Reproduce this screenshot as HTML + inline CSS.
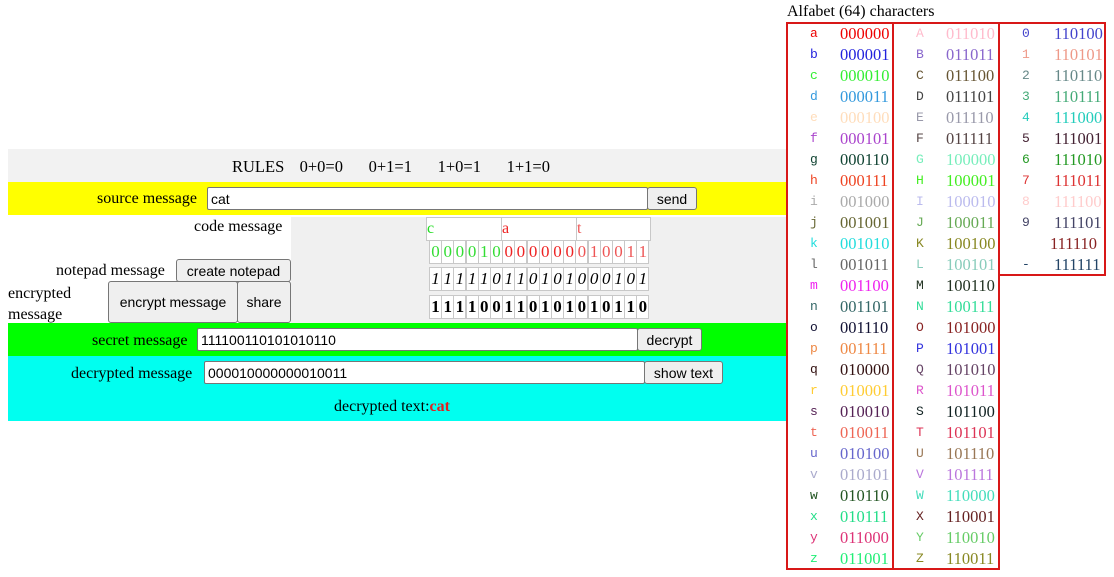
<!DOCTYPE html>
<html><head><meta charset="utf-8">
<style>
*{margin:0;padding:0;box-sizing:border-box}
body{width:1114px;height:577px;background:#fff;position:relative;overflow:hidden;font-family:"Liberation Serif",serif;font-size:16px;color:#000}
.a{position:absolute}
.band{position:absolute;left:8px;width:778px}
input.t{position:absolute;height:23px;border:1px solid #767676;border-radius:2px;background:#fff;font-family:"Liberation Sans",sans-serif;font-size:14px;padding:0 3px;color:#000}
.btn{position:absolute;background:#efefef;border:1px solid #767676;border-radius:3px;font-family:"Liberation Sans",sans-serif;font-size:14px;display:flex;align-items:center;justify-content:center;color:#000}
.cell{position:absolute;border:1px solid #c8c8c8;background:#fff;text-align:center;line-height:21px;font-size:17px}
.box{position:absolute;border:2px solid #d81818}
.r{position:absolute;height:21px;line-height:21px}
.r .l{position:absolute;font-family:"Liberation Mono",monospace;font-size:13px}
.r .c{position:absolute;font-size:16.5px}
</style></head><body>
<div class="band" style="top:149px;height:33px;background:#f2f2f2"></div>
<div class="a" style="left:232px;top:157px;font-size:16.5px;word-spacing:1px">RULES&nbsp;&nbsp;&nbsp;0+0=0&nbsp;&nbsp;&nbsp;&nbsp;&nbsp;0+1=1&nbsp;&nbsp;&nbsp;&nbsp;&nbsp;1+0=1&nbsp;&nbsp;&nbsp;&nbsp;&nbsp;1+1=0</div>
<div class="band" style="top:182px;height:33px;background:#ffff00"></div>
<div class="a" style="left:97px;top:190px">source message</div>
<input class="t" style="left:207px;top:187px;width:441px" value="cat">
<div class="btn" style="left:647px;top:187px;width:50px;height:23px">send</div>
<div class="a" style="left:291px;top:217px;width:495px;height:106px;background:#f0f0f0"></div>
<div class="a" style="left:194px;top:218px">code message</div>
<div class="a" style="left:56px;top:262px">notepad message</div>
<div class="btn" style="left:176px;top:259px;width:115px;height:23px">create notepad</div>
<div class="a" style="left:8px;top:283px;line-height:21px">encrypted<br>message</div>
<div class="btn" style="left:108px;top:281px;width:130px;height:42px">encrypt message</div>
<div class="btn" style="left:237px;top:281px;width:54px;height:42px">share</div>
<div class="cell" style="left:426px;top:217px;width:76px;height:24px;text-align:left;color:#2d2;font-size:16px">c</div>
<div class="cell" style="left:501px;top:217px;width:76px;height:24px;text-align:left;color:#e22;font-size:16px">a</div>
<div class="cell" style="left:576px;top:217px;width:75px;height:24px;text-align:left;color:#e55;font-size:16px">t</div>
<div id="bits"></div>
<div class="band" style="top:323px;height:33px;background:#00ff00"></div>
<div class="a" style="left:92px;top:332px">secret message</div>
<input class="t" style="left:197px;top:328px;width:441px" value="111100110101010110">
<div class="btn" style="left:637px;top:328px;width:65px;height:23px">decrypt</div>
<div class="band" style="top:356px;height:65px;background:#00fff0"></div>
<div class="a" style="left:71px;top:365px">decrypted message</div>
<input class="t" style="left:204px;top:361px;width:441px" value="000010000000010011">
<div class="btn" style="left:644px;top:361px;width:79px;height:23px">show text</div>
<div class="a" style="left:334px;top:398px">decrypted text:<b style="color:#e02020">cat</b></div>

<div class="a" style="left:787px;top:3px;font-size:16px">Alfabet (64) characters</div>
<div class="box" style="left:786px;top:22px;width:108px;height:548px"></div>
<div class="box" style="left:892px;top:22px;width:108px;height:548px"></div>
<div class="box" style="left:998px;top:22px;width:108px;height:254px"></div>
<div id="tab"></div>
<script>
var s1="000010000000010011",s2="111110110101000101",s3="111100110101010110";
var h="";
for(var i=0;i<18;i++){var x=429+i*12.2;
h+='<div class="cell" style="left:'+x+'px;top:240px;width:13px;height:24px;color:'+(i<6?'#3d3':(i<12?'#e22':'#e55'))+'">'+s1[i]+'</div>';
h+='<div class="cell" style="left:'+x+'px;top:267px;width:13px;height:24px;font-style:italic">'+s2[i]+'</div>';
h+='<div class="cell" style="left:'+x+'px;top:295px;width:13px;height:24px;font-weight:bold">'+s3[i]+'</div>';}
document.getElementById('bits').innerHTML=h;
var c1="#e00 #22d #3e3 #39d #fdb #a4c #143 #e42 #aaa #663 #2dd #666 #e2e #366 #113 #e84 #311 #fc3 #525 #e65 #66c #aac #252 #2d8 #d37 #2e7".split(" ");
var c2="#fbc #86c #653 #444 #99a #544 #7eb #4e2 #bbe #6a5 #882 #8cb #232 #3d9 #822 #33d #646 #d5c #122 #d35 #975 #b7d #4db #622 #6c6 #882".split(" ");
var c3="#44c #e98 #688 #4a7 #2cb #423 #292 #d33 #fcc #446 #822 #246".split(" ");
var L="abcdefghijklmnopqrstuvwxyzABCDEFGHIJKLMNOPQRSTUVWXYZ0123456789 -";
function b(n){var r=n.toString(2);while(r.length<6)r="0"+r;return r}
var t="";
for(var i=0;i<64;i++){var row=i%26,colr,x0,lx,cx;
if(i<26){colr=c1[i];x0=786;lx=24;cx=54}else if(i<52){colr=c2[i-26];x0=892;lx=24;cx=54}else{row=i-52;colr=c3[i-52];x0=998;lx=24;cx=56}
t+='<div class="r" style="left:'+x0+'px;top:'+(23+row*21)+'px;color:'+colr+'"><span class="l" style="left:'+lx+'px">'+(L[i]==" "?"&nbsp;":L[i])+'</span><span class="c" style="left:'+(i==62?cx-4:cx)+'px">'+b(i)+'</span></div>';}
document.getElementById('tab').innerHTML=t;
</script>
</body></html>
